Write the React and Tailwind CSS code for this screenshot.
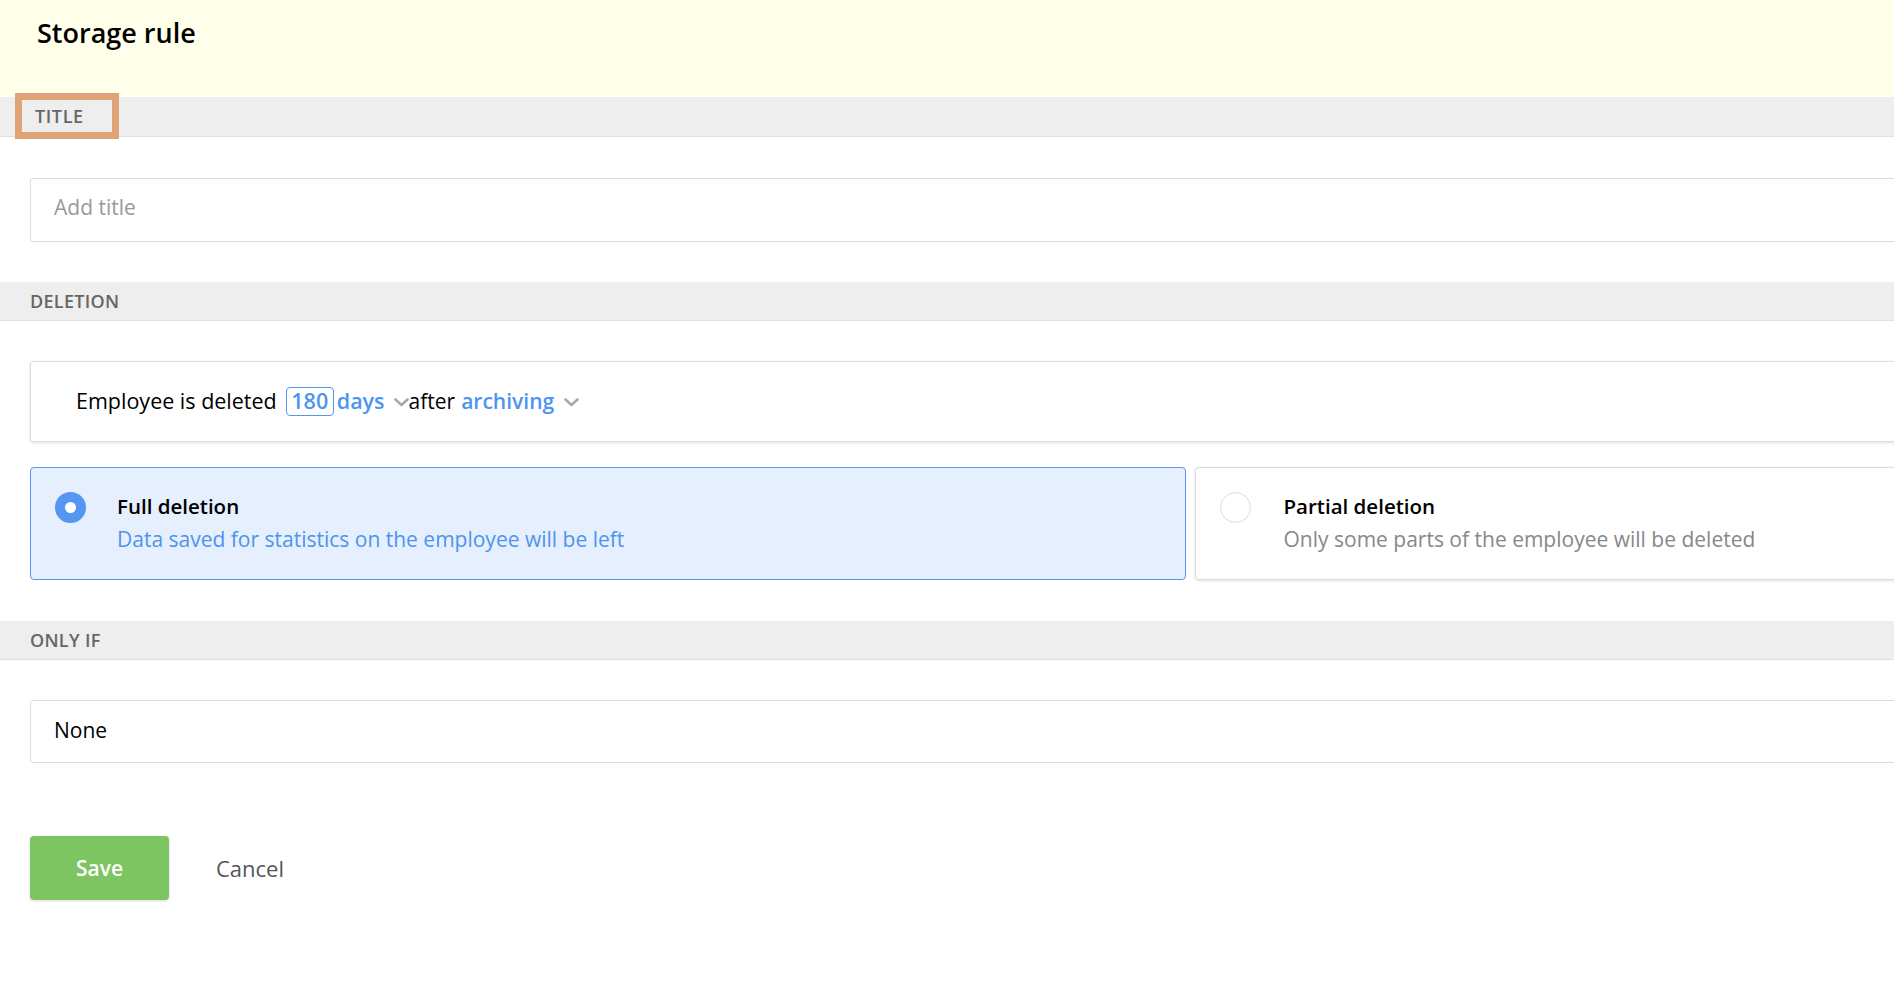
import React from "react";

function Chevron() {
  return (
    <svg width="15" height="9" viewBox="0 0 15 9" className="shrink-0">
      <path d="M1.5 1.5 L7.5 7 L13.5 1.5" fill="none" stroke="#a9a9a9" strokeWidth="2.6" strokeLinecap="round" strokeLinejoin="round" />
    </svg>
  );
}

function Band({ children, className = "" }) {
  return (
    <div className={"relative flex items-center bg-[#eeeeee] border-b border-[#dfdfdf] text-[18px] font-semibold text-[#666666] tracking-[0.3px] " + className}>
      {children}
    </div>
  );
}

export default function App() {
  return (
    <div
      className="w-[1894px] h-[984px] overflow-hidden bg-white text-black"
      style={{ fontFamily: "'Open Sans', 'Liberation Sans', sans-serif" }}
    >
      <div className="w-[2380px]">
        <div className="h-[97px] bg-[#ffffea] pl-[37px] pt-[13px]">
          <h1 className="text-[27px] font-semibold leading-[40px] text-black">Storage rule</h1>
        </div>

        <Band className="h-[40px] pl-[35px]">
          <div className="absolute left-[15px] top-[-4px] w-[104px] h-[46px] border-[7px] border-[#dea477]" />
          <span className="tracking-[0.6px]">TITLE</span>
        </Band>

        <div className="px-[30px] pt-[41px] pb-[40px]">
          <div className="h-[64px] border border-[#dddddd] rounded-[3px] flex items-center pl-[23px] pb-[4px] text-[21px] text-[#999999]">
            Add title
          </div>
        </div>

        <Band className="h-[39px] pl-[30px]">
          <span>DELETION</span>
        </Band>

        <div className="px-[30px] pt-[40px] pb-[41px]">
          <div className="h-[81px] border border-[#dddddd] rounded-[3px] shadow-[0_1px_3px_rgba(0,0,0,0.12)] flex items-center pl-[45px] text-[21.5px]">
            <span>Employee is deleted</span>
            <span className="ml-[9px] h-[29px] w-[48px] border-[1.5px] border-[#5596f2] rounded-[4px] flex items-center justify-center text-[#4e94ef] font-semibold">180</span>
            <span className="ml-[3px] text-[#4e94ef] font-semibold">days</span>
            <span className="ml-[9px] mt-[2px]"><Chevron /></span>
            <span className="text-[21px]">after</span>
            <span className="ml-[6px] text-[21px] text-[#4e94ef] font-semibold">archiving</span>
            <span className="ml-[10px] mt-[2px]"><Chevron /></span>
          </div>

          <div className="mt-[25px] grid grid-cols-2 gap-[9px]">
            <div className="h-[113px] bg-[#e5effd] border border-[#5596f2] rounded-[4px] flex pl-[24px] pt-[24px]">
              <div className="w-[31px] h-[31px] rounded-full bg-[#5596f2] flex items-center justify-center shrink-0">
                <div className="w-[11px] h-[11px] rounded-full bg-white" />
              </div>
              <div className="ml-[31px]">
                <div className="text-[20.5px] font-semibold leading-[28px]">Full deletion</div>
                <div className="mt-[5px] text-[21px] leading-[28px] text-[#4e94ef]">Data saved for statistics on the employee will be left</div>
              </div>
            </div>
            <div className="h-[113px] bg-white border border-[#dddddd] rounded-[4px] shadow-[0_1px_3px_rgba(0,0,0,0.12)] flex pl-[24px] pt-[24px]">
              <div className="w-[31px] h-[31px] rounded-full bg-white border border-[#dddddd] shrink-0" />
              <div className="ml-[33px]">
                <div className="text-[20.5px] font-semibold leading-[28px]">Partial deletion</div>
                <div className="mt-[5px] text-[21px] leading-[28px] text-[#888888]">Only some parts of the employee will be deleted</div>
              </div>
            </div>
          </div>
        </div>

        <Band className="h-[39px] pl-[30px]">
          <span>ONLY IF</span>
        </Band>

        <div className="px-[30px] pt-[40px]">
          <div className="h-[63px] border border-[#dddddd] rounded-[3px] flex items-center pl-[23px] pb-[2px] text-[21px] text-black">
            None
          </div>

          <div className="mt-[73px] flex items-center">
            <button className="w-[139px] h-[64px] rounded-[4px] bg-[#7dc562] text-white text-[21px] font-semibold pt-[2px] shadow-[0_1px_3px_rgba(0,0,0,0.15)]">
              Save
            </button>
            <span className="ml-[47px] text-[22px] text-[#555555]">Cancel</span>
          </div>
        </div>
      </div>
    </div>
  );
}
